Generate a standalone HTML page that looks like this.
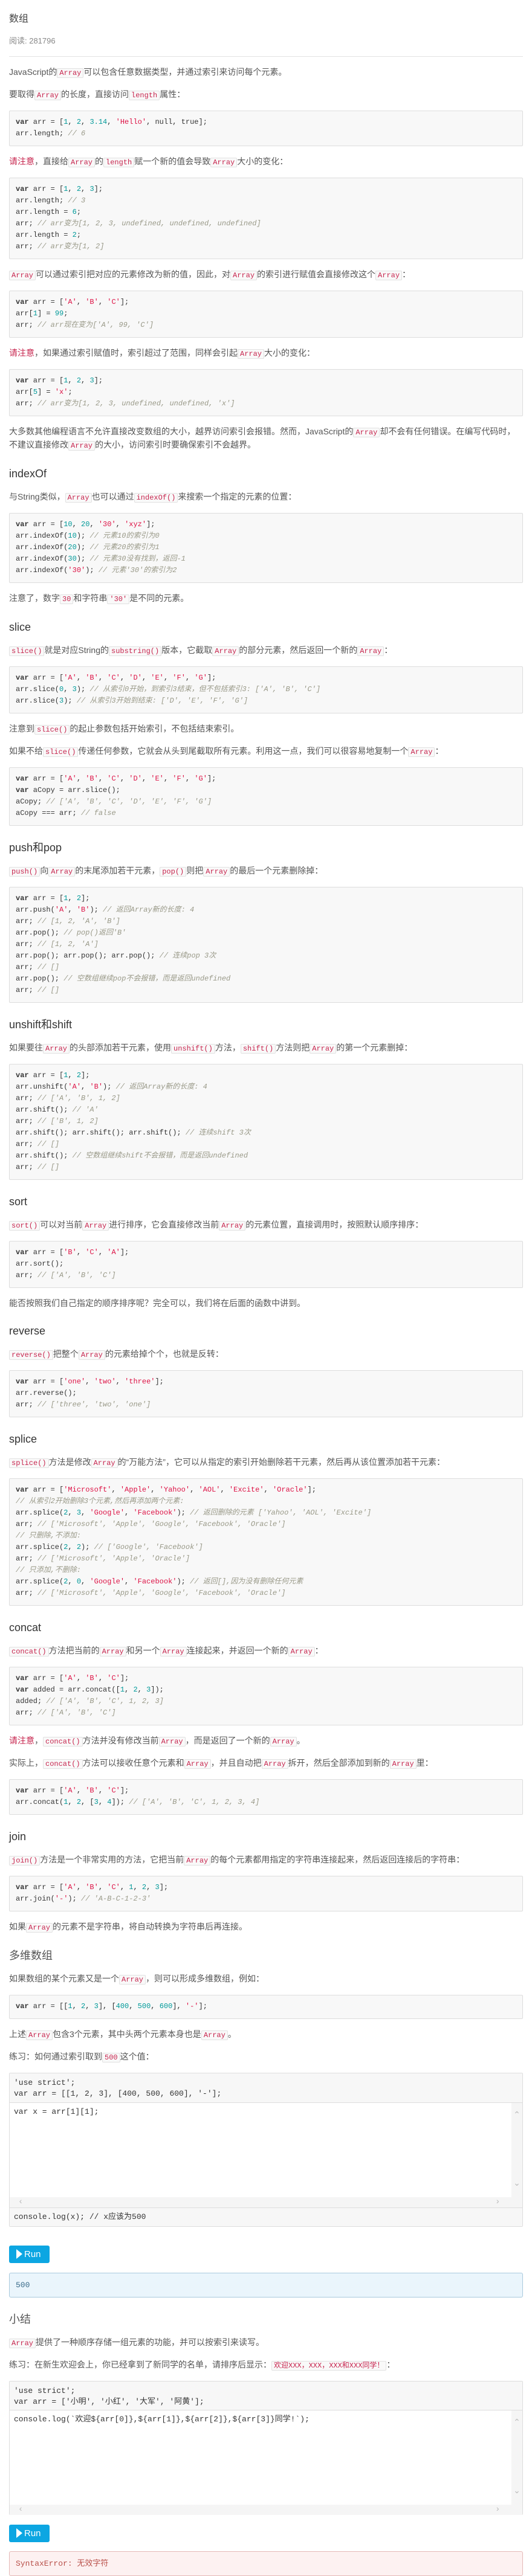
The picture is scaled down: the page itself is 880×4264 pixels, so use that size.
<!DOCTYPE html>
<html><head><meta charset="utf-8">
<style>
*{box-sizing:border-box}
html,body{margin:0;padding:0;background:#fff}
body{width:880px;height:4235px;overflow:hidden;font-family:"Liberation Sans","Noto Sans CJK SC",sans-serif;color:#555;font-size:14px}
.wrap{padding:0 15px}
.title{margin-top:22px;font-size:16px;line-height:20px;color:#444}
.read{margin-top:16px;font-size:13px;line-height:20px;color:#888}
hr{border:0;border-top:1px solid #e3e3e3;margin:15px 0 15px;height:0}
p{margin:0 0 15px;line-height:20px}
h3{margin:25px 0 17px;font-size:18px;line-height:22px;font-weight:normal;color:#333}
h3.cj{color:#555}
code{font-family:"Liberation Mono","Noto Sans CJK SC",monospace;font-size:12px;color:#c7254e;background:#f9f9f9;border:1px solid #e1e1e1;border-radius:2px;padding:0 3px}
.w{color:#c7254e}
pre{margin:0 0 15px;background:#f8f8f8;border:1px solid #ddd;border-radius:2px;padding:9px 10px 10px;font-family:"Liberation Mono","Noto Sans CJK SC",monospace;font-size:12px;line-height:19px;color:#333;white-space:pre;overflow:hidden}
.k{font-weight:bold;color:#333}.n{color:#099}.s{color:#d14}.c{color:#998;font-style:italic}
.ed{border:1px solid #ddd;border-radius:2px;font-family:"Liberation Mono","Noto Sans CJK SC",monospace;font-size:13px;color:#333;position:relative}
.ed .hd{background:#f7f7f7;border-bottom:1px solid #ddd;padding:7px 7px 0;line-height:18px;white-space:pre}
.ed .bd{position:relative;background:#fff}
.ed .bd .ln{padding:6px 7px 0;line-height:18px;white-space:pre}
.ed .vs{position:absolute;right:0;top:0;width:18px;background:#f5f5f5;color:#bbb;font-size:14px;text-align:center}
.ed .hs{position:absolute;left:0;right:0;height:17px;background:#f5f5f5;color:#bbb;font-size:14px;line-height:17px}
.ed .ft{background:#f7f7f7;border-top:1px solid #ddd;padding:0 7px;line-height:30px;white-space:pre}
.run{display:block;width:67px;height:29px;background:#0ca6e2;border-radius:3px;color:#fff;font-size:15px;line-height:29px;padding-left:12px}
.run i{display:inline-block;width:0;height:0;border-left:10px solid #fff;border-top:8px solid transparent;border-bottom:8px solid transparent;vertical-align:-3px;margin-right:3px}
.out{border:1px solid #a9c9dd;background:#eaf5fc;border-radius:3px;height:41px;padding:0 10px;line-height:40px;font-family:"Liberation Mono",monospace;font-size:13px;color:#3a6b8a}
.err{border:1px solid #e5b9b7;background:#fdf1f1;border-radius:3px;height:41px;padding:0 10px;line-height:40px;font-family:"Liberation Mono","Noto Sans CJK SC",monospace;font-size:13px;color:#b9504a}
</style></head><body><div class="wrap">
<div class="title">数组</div>
<div class="read">阅读: 281796</div>
<hr>
<p>JavaScript的<code>Array</code>可以包含任意数据类型，并通过索引来访问每个元素。</p>
<p>要取得<code>Array</code>的长度，直接访问<code>length</code>属性：</p>
<pre><span class="k">var</span> arr = [<span class="n">1</span>, <span class="n">2</span>, <span class="n">3.14</span>, <span class="s">'Hello'</span>, null, true];
arr.length; <span class="c">// 6</span></pre>
<p><span class="w">请注意</span>，直接给<code>Array</code>的<code>length</code>赋一个新的值会导致<code>Array</code>大小的变化：</p>
<pre><span class="k">var</span> arr = [<span class="n">1</span>, <span class="n">2</span>, <span class="n">3</span>];
arr.length; <span class="c">// 3</span>
arr.length = <span class="n">6</span>;
arr; <span class="c">// arr变为[1, 2, 3, undefined, undefined, undefined]</span>
arr.length = <span class="n">2</span>;
arr; <span class="c">// arr变为[1, 2]</span></pre>
<p><code>Array</code>可以通过索引把对应的元素修改为新的值，因此，对<code>Array</code>的索引进行赋值会直接修改这个<code>Array</code>：</p>
<pre><span class="k">var</span> arr = [<span class="s">'A'</span>, <span class="s">'B'</span>, <span class="s">'C'</span>];
arr[<span class="n">1</span>] = <span class="n">99</span>;
arr; <span class="c">// arr现在变为['A', 99, 'C']</span></pre>
<p><span class="w">请注意</span>，如果通过索引赋值时，索引超过了范围，同样会引起<code>Array</code>大小的变化：</p>
<pre><span class="k">var</span> arr = [<span class="n">1</span>, <span class="n">2</span>, <span class="n">3</span>];
arr[<span class="n">5</span>] = <span class="s">'x'</span>;
arr; <span class="c">// arr变为[1, 2, 3, undefined, undefined, 'x']</span></pre>
<p>大多数其他编程语言不允许直接改变数组的大小，越界访问索引会报错。然而，JavaScript的<code>Array</code>却不会有任何错误。在编写代码时，<br>不建议直接修改<code>Array</code>的大小，访问索引时要确保索引不会越界。</p>
<h3>indexOf</h3>
<p>与String类似，<code>Array</code>也可以通过<code>indexOf()</code>来搜索一个指定的元素的位置：</p>
<pre><span class="k">var</span> arr = [<span class="n">10</span>, <span class="n">20</span>, <span class="s">'30'</span>, <span class="s">'xyz'</span>];
arr.indexOf(<span class="n">10</span>); <span class="c">// 元素10的索引为0</span>
arr.indexOf(<span class="n">20</span>); <span class="c">// 元素20的索引为1</span>
arr.indexOf(<span class="n">30</span>); <span class="c">// 元素30没有找到，返回-1</span>
arr.indexOf(<span class="s">'30'</span>); <span class="c">// 元素'30'的索引为2</span></pre>
<p>注意了，数字<code>30</code>和字符串<code>'30'</code>是不同的元素。</p>
<h3>slice</h3>
<p><code>slice()</code>就是对应String的<code>substring()</code>版本，它截取<code>Array</code>的部分元素，然后返回一个新的<code>Array</code>：</p>
<pre><span class="k">var</span> arr = [<span class="s">'A'</span>, <span class="s">'B'</span>, <span class="s">'C'</span>, <span class="s">'D'</span>, <span class="s">'E'</span>, <span class="s">'F'</span>, <span class="s">'G'</span>];
arr.slice(<span class="n">0</span>, <span class="n">3</span>); <span class="c">// 从索引0开始，到索引3结束，但不包括索引3: ['A', 'B', 'C']</span>
arr.slice(<span class="n">3</span>); <span class="c">// 从索引3开始到结束: ['D', 'E', 'F', 'G']</span></pre>
<p>注意到<code>slice()</code>的起止参数包括开始索引，不包括结束索引。</p>
<p>如果不给<code>slice()</code>传递任何参数，它就会从头到尾截取所有元素。利用这一点，我们可以很容易地复制一个<code>Array</code>：</p>
<pre><span class="k">var</span> arr = [<span class="s">'A'</span>, <span class="s">'B'</span>, <span class="s">'C'</span>, <span class="s">'D'</span>, <span class="s">'E'</span>, <span class="s">'F'</span>, <span class="s">'G'</span>];
<span class="k">var</span> aCopy = arr.slice();
aCopy; <span class="c">// ['A', 'B', 'C', 'D', 'E', 'F', 'G']</span>
aCopy === arr; <span class="c">// false</span></pre>
<h3>push和pop</h3>
<p><code>push()</code>向<code>Array</code>的末尾添加若干元素，<code>pop()</code>则把<code>Array</code>的最后一个元素删除掉：</p>
<pre><span class="k">var</span> arr = [<span class="n">1</span>, <span class="n">2</span>];
arr.push(<span class="s">'A'</span>, <span class="s">'B'</span>); <span class="c">// 返回Array新的长度: 4</span>
arr; <span class="c">// [1, 2, 'A', 'B']</span>
arr.pop(); <span class="c">// pop()返回'B'</span>
arr; <span class="c">// [1, 2, 'A']</span>
arr.pop(); arr.pop(); arr.pop(); <span class="c">// 连续pop 3次</span>
arr; <span class="c">// []</span>
arr.pop(); <span class="c">// 空数组继续pop不会报错，而是返回undefined</span>
arr; <span class="c">// []</span></pre>
<h3>unshift和shift</h3>
<p>如果要往<code>Array</code>的头部添加若干元素，使用<code>unshift()</code>方法，<code>shift()</code>方法则把<code>Array</code>的第一个元素删掉：</p>
<pre><span class="k">var</span> arr = [<span class="n">1</span>, <span class="n">2</span>];
arr.unshift(<span class="s">'A'</span>, <span class="s">'B'</span>); <span class="c">// 返回Array新的长度: 4</span>
arr; <span class="c">// ['A', 'B', 1, 2]</span>
arr.shift(); <span class="c">// 'A'</span>
arr; <span class="c">// ['B', 1, 2]</span>
arr.shift(); arr.shift(); arr.shift(); <span class="c">// 连续shift 3次</span>
arr; <span class="c">// []</span>
arr.shift(); <span class="c">// 空数组继续shift不会报错，而是返回undefined</span>
arr; <span class="c">// []</span></pre>
<h3>sort</h3>
<p><code>sort()</code>可以对当前<code>Array</code>进行排序，它会直接修改当前<code>Array</code>的元素位置，直接调用时，按照默认顺序排序：</p>
<pre><span class="k">var</span> arr = [<span class="s">'B'</span>, <span class="s">'C'</span>, <span class="s">'A'</span>];
arr.sort();
arr; <span class="c">// ['A', 'B', 'C']</span></pre>
<p>能否按照我们自己指定的顺序排序呢？完全可以，我们将在后面的函数中讲到。</p>
<h3>reverse</h3>
<p><code>reverse()</code>把整个<code>Array</code>的元素给掉个个，也就是反转：</p>
<pre><span class="k">var</span> arr = [<span class="s">'one'</span>, <span class="s">'two'</span>, <span class="s">'three'</span>];
arr.reverse();
arr; <span class="c">// ['three', 'two', 'one']</span></pre>
<h3>splice</h3>
<p><code>splice()</code>方法是修改<code>Array</code>的“万能方法”，它可以从指定的索引开始删除若干元素，然后再从该位置添加若干元素：</p>
<pre><span class="k">var</span> arr = [<span class="s">'Microsoft'</span>, <span class="s">'Apple'</span>, <span class="s">'Yahoo'</span>, <span class="s">'AOL'</span>, <span class="s">'Excite'</span>, <span class="s">'Oracle'</span>];
<span class="c">// 从索引2开始删除3个元素,然后再添加两个元素:</span>
arr.splice(<span class="n">2</span>, <span class="n">3</span>, <span class="s">'Google'</span>, <span class="s">'Facebook'</span>); <span class="c">// 返回删除的元素 ['Yahoo', 'AOL', 'Excite']</span>
arr; <span class="c">// ['Microsoft', 'Apple', 'Google', 'Facebook', 'Oracle']</span>
<span class="c">// 只删除,不添加:</span>
arr.splice(<span class="n">2</span>, <span class="n">2</span>); <span class="c">// ['Google', 'Facebook']</span>
arr; <span class="c">// ['Microsoft', 'Apple', 'Oracle']</span>
<span class="c">// 只添加,不删除:</span>
arr.splice(<span class="n">2</span>, <span class="n">0</span>, <span class="s">'Google'</span>, <span class="s">'Facebook'</span>); <span class="c">// 返回[],因为没有删除任何元素</span>
arr; <span class="c">// ['Microsoft', 'Apple', 'Google', 'Facebook', 'Oracle']</span></pre>
<h3>concat</h3>
<p><code>concat()</code>方法把当前的<code>Array</code>和另一个<code>Array</code>连接起来，并返回一个新的<code>Array</code>：</p>
<pre><span class="k">var</span> arr = [<span class="s">'A'</span>, <span class="s">'B'</span>, <span class="s">'C'</span>];
<span class="k">var</span> added = arr.concat([<span class="n">1</span>, <span class="n">2</span>, <span class="n">3</span>]);
added; <span class="c">// ['A', 'B', 'C', 1, 2, 3]</span>
arr; <span class="c">// ['A', 'B', 'C']</span></pre>
<p><span class="w">请注意</span>，<code>concat()</code>方法并没有修改当前<code>Array</code>，而是返回了一个新的<code>Array</code>。</p>
<p>实际上，<code>concat()</code>方法可以接收任意个元素和<code>Array</code>，并且自动把<code>Array</code>拆开，然后全部添加到新的<code>Array</code>里：</p>
<pre><span class="k">var</span> arr = [<span class="s">'A'</span>, <span class="s">'B'</span>, <span class="s">'C'</span>];
arr.concat(<span class="n">1</span>, <span class="n">2</span>, [<span class="n">3</span>, <span class="n">4</span>]); <span class="c">// ['A', 'B', 'C', 1, 2, 3, 4]</span></pre>
<h3>join</h3>
<p><code>join()</code>方法是一个非常实用的方法，它把当前<code>Array</code>的每个元素都用指定的字符串连接起来，然后返回连接后的字符串：</p>
<pre><span class="k">var</span> arr = [<span class="s">'A'</span>, <span class="s">'B'</span>, <span class="s">'C'</span>, <span class="n">1</span>, <span class="n">2</span>, <span class="n">3</span>];
arr.join(<span class="s">'-'</span>); <span class="c">// 'A-B-C-1-2-3'</span></pre>
<p>如果<code>Array</code>的元素不是字符串，将自动转换为字符串后再连接。</p>
<h3 class="cj">多维数组</h3>
<p>如果数组的某个元素又是一个<code>Array</code>，则可以形成多维数组，例如：</p>
<pre><span class="k">var</span> arr = [[<span class="n">1</span>, <span class="n">2</span>, <span class="n">3</span>], [<span class="n">400</span>, <span class="n">500</span>, <span class="n">600</span>], <span class="s">'-'</span>];</pre>
<p>上述<code>Array</code>包含3个元素，其中头两个元素本身也是<code>Array</code>。</p>
<p>练习：如何通过索引取到<code>500</code>这个值：</p>
<div class="ed">
<div class="hd" style="height:49px">'use strict';
var arr = [[1, 2, 3], [400, 500, 600], '-'];</div>
<div class="bd" style="height:173px">
<div class="ln">var x = arr[1][1];</div>
<div class="vs" style="height:156px"><div style="padding-top:12px">&#8963;</div><div style="padding-top:96px">&#8964;</div></div>
<div class="hs" style="top:156px"><span style="position:absolute;left:14px">&#8249;</span><span style="position:absolute;left:803px">&#8250;</span></div>
</div>
<div class="ft">console.log(x); // x应该为500</div>
</div>
<div style="height:31px"></div>
<div class="run"><i></i>Run</div>
<div style="height:16px"></div>
<div class="out">500</div>
<h3 class="cj">小结</h3>
<p><code>Array</code>提供了一种顺序存储一组元素的功能，并可以按索引来读写。</p>
<p>练习：在新生欢迎会上，你已经拿到了新同学的名单，请排序后显示：<code>欢迎XXX，XXX，XXX和XXX同学！</code>：</p>
<div class="ed">
<div class="hd" style="height:48px">'use strict';
var arr = ['小明', '小红', '大军', '阿黄'];</div>
<div class="bd" style="height:172px">
<div class="ln">console.log(`欢迎${arr[0]},${arr[1]},${arr[2]},${arr[3]}同学!`);</div>
<div class="vs" style="height:156px"><div style="padding-top:12px">&#8963;</div><div style="padding-top:96px">&#8964;</div></div>
<div class="hs" style="top:156px"><span style="position:absolute;left:14px">&#8249;</span><span style="position:absolute;left:803px">&#8250;</span></div>
</div>
</div>
<div style="height:16px"></div>
<div class="run"><i></i>Run</div>
<div style="height:15px"></div>
<div class="err">SyntaxError: 无效字符</div>
</div></body></html>
